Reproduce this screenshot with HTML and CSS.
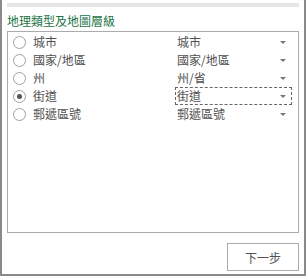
FILE: index.html
```html
<!DOCTYPE html>
<html lang="zh-Hant">
<head>
    <meta charset="UTF-8">
    <meta name="viewport" content="width=device-width, initial-scale=1.0">
    <title>地理類型及地圖層級</title>
    <link rel="stylesheet" href="styles.css">
</head>
<body>
    <div class="panel">
        <div class="topbar"></div>
        <h2 class="title">地理類型及地圖層級</h2>
        <div class="box">
            <ul class="rows">
                <li class="row">
                    <span class="radio"></span>
                    <span class="label">城市</span>
                    <span class="select"><span>城市</span><span class="arrow"></span></span>
                </li>
                <li class="row">
                    <span class="radio"></span>
                    <span class="label">國家/地區</span>
                    <span class="select"><span>國家/地區</span><span class="arrow"></span></span>
                </li>
                <li class="row">
                    <span class="radio"></span>
                    <span class="label">州</span>
                    <span class="select"><span>州/省</span><span class="arrow"></span></span>
                </li>
                <li class="row">
                    <span class="radio checked"></span>
                    <span class="label">街道</span>
                    <span class="select focused"><span>街道</span><span class="arrow"></span></span>
                </li>
                <li class="row">
                    <span class="radio"></span>
                    <span class="label">郵遞區號</span>
                    <span class="select"><span>郵遞區號</span><span class="arrow"></span></span>
                </li>
            </ul>
        </div>
        <div class="footer">
            <button type="button" class="next">下一步</button>
        </div>
    </div>
</body>
</html>
```

FILE: styles.css
```css
* {
    padding: 0;
    margin: 0;
    box-sizing: border-box;
}

body {
    background: #fff;
    font-family: "Noto Sans CJK TC", "Noto Sans", sans-serif;
    font-size: 12px;
    color: #505050;
}

.panel {
    width: 306px;
    height: 276px;
    border: 2px solid #8a8a8a;
    border-top: none;
    padding: 3px 5px 0 5px;
    display: flex;
    flex-direction: column;
}

.topbar {
    height: 4px;
    background: #e6e6e6;
}

.title {
    font-size: 12px;
    font-weight: normal;
    color: #217346;
    line-height: 14px;
    margin-top: 7px;
    height: 17px;
}

.box {
    border: 1px solid #ababab;
    height: 202px;
    padding: 1px 0 0 5px;
}

.rows {
    list-style: none;
}

.row {
    display: flex;
    align-items: center;
    height: 18px;
}

.radio {
    width: 13px;
    height: 13px;
    border: 1px solid #a0a0a0;
    border-radius: 50%;
    background: #fff;
    display: flex;
    align-items: center;
    justify-content: center;
    flex-shrink: 0;
}

.radio.checked::after {
    content: "";
    width: 5px;
    height: 5px;
    border-radius: 50%;
    background: #555;
}

.label {
    margin-left: 7px;
    width: 142px;
    line-height: 14px;
}

.select {
    width: 117px;
    height: 18px;
    display: flex;
    align-items: center;
    justify-content: space-between;
    padding: 0 5px 0 1px;
    border: 1px solid transparent;
    line-height: 14px;
}

.select.focused {
    border: 1px dashed #666;
}

.arrow {
    width: 0;
    height: 0;
    border-left: 3px solid transparent;
    border-right: 3px solid transparent;
    border-top: 3px solid #777;
}

.footer {
    display: flex;
    justify-content: flex-end;
    margin-top: 10px;
}

.next {
    width: 72px;
    height: 28px;
    background: #fff;
    border: 1px solid #ababab;
    font-family: "Noto Sans CJK TC", "Noto Sans", sans-serif;
    font-size: 12px;
    color: #505050;
    cursor: pointer;
}
```
